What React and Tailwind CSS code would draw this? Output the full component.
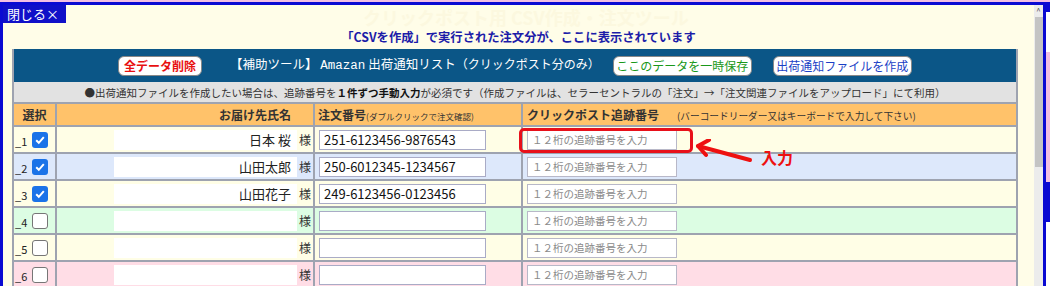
import React from 'react';

const rows = [
  { n: 1, checked: true, name: '日本 桜', order: '251-6123456-9876543', bg: 'bg-[#fffee6]' },
  { n: 2, checked: true, name: '山田太郎', order: '250-6012345-1234567', bg: 'bg-[#dde8fb]' },
  { n: 3, checked: true, name: '山田花子', order: '249-6123456-0123456', bg: 'bg-[#fffee6]' },
  { n: 4, checked: false, name: '', order: '', bg: 'bg-[#dcfde3]' },
  { n: 5, checked: false, name: '', order: '', bg: 'bg-[#fffee6]' },
  { n: 6, checked: false, name: '', order: '', bg: 'bg-[#ffdde6]' },
];

const jp = { fontFamily: '"Noto Sans CJK JP", "Noto Sans", sans-serif' };

function Check({ checked }) {
  if (!checked) {
    return <span className="block w-[16px] h-[16px] rounded-[3px] border border-[#767676] bg-white" />;
  }
  return (
    <span className="flex items-center justify-center w-[16px] h-[16px] rounded-[3px] bg-[#1a73e8]">
      <svg width="12" height="12" viewBox="0 0 12 12">
        <path d="M2.2 6.3 L4.8 8.8 L9.8 3.2" fill="none" stroke="white" strokeWidth="2" />
      </svg>
    </span>
  );
}

function Row({ row }) {
  return (
    <div className={`grid grid-cols-[43px_258px_208px_1fr] h-[27px] border-b-2 border-[#9ea3b0] ${row.bg}`}>
      <div className="flex items-center border-r-2 border-[#9ea3b0] pl-[1px]">
        <span className="text-[11px] text-[#222] w-[17px] pt-[4px]">_{row.n}</span>
        <Check checked={row.checked} />
      </div>
      <div className="flex items-center justify-end border-r-2 border-[#9ea3b0] pr-[2px]">
        <div className="w-[183px] h-[20px] bg-white text-right pr-[6px] text-[13px] leading-[20px] text-[#222]">
          {row.name}
        </div>
        <span className="ml-[2px] text-[12px] text-[#333]">様</span>
      </div>
      <div className="flex items-center border-r-2 border-[#9ea3b0] pl-[4px]">
        <div className="w-[167px] h-[20px] bg-white border border-[#a9abc6] pl-[4px] text-[13px] leading-[18px] text-[#111]">
          {row.order}
        </div>
      </div>
      <div className="relative flex items-center pl-[4px]">
        <div className="w-[150px] h-[20px] bg-white border border-[#b8b8c8] pl-[4px] text-[10.5px] leading-[18px] text-[#8a8a8a]">
          １２桁の追跡番号を入力
        </div>
        {row.n === 1 && (
          <>
            <div className="absolute left-[-4px] top-[1px] w-[174px] h-[25px] border-[3px] border-[#e8101a] rounded-[5px]" />
            <svg className="absolute left-[172px] top-[12px]" width="60" height="24" viewBox="0 0 60 24">
              <path d="M3 7 L55 21" stroke="#ee1010" strokeWidth="4" strokeLinecap="round" />
              <path d="M14 1 L3 7 L11 16" fill="none" stroke="#ee1010" strokeWidth="4" strokeLinecap="round" strokeLinejoin="round" />
            </svg>
            <span className="absolute left-[238px] top-[22px] text-[16px] font-bold text-[#ee1010] leading-none">入力</span>
          </>
        )}
      </div>
    </div>
  );
}

export default function App() {
  return (
    <div className="w-[1050px] h-[286px] overflow-hidden bg-white" style={jp}>
      <div className="h-[2px] bg-[#f2bfe3]" />
      <div className="flex h-[284px]">
        <div className="w-[1046px] flex border-t-[3px] border-x-[3px] border-[#0a0ad2] bg-[#fffde8]">
          <div className="relative flex-1">
            <div className="absolute left-[360px] top-[3px] text-[18px] font-bold text-[#fcf8df] whitespace-nowrap leading-none">
              クリックポスト用 CSV作成・注文ツール
            </div>
            <div className="relative w-[63px] h-[18px] bg-[#1010c8] text-white text-[13px] leading-[18px] pl-[4px]">閉じる×</div>
            <div className="relative h-[26px] pt-[6px] text-center text-[12.3px] leading-[16px] font-bold text-[#1c1ca8]">
              「CSVを作成」で実行された注文分が、ここに表示されています
            </div>
            <div className="ml-[9px] w-[1006px] border-x-2 border-[#9ea3b0]">
              <div className="h-[33px] bg-[#0b5687] flex items-center pl-[104px]">
                <button className="h-[20px] w-[84px] bg-white rounded-[6px] border border-[#888] text-[12px] font-bold text-[#e81010] leading-none">
                  全データ削除
                </button>
                <span className="ml-[28px] text-white text-[12.5px] whitespace-nowrap">
                  【補助ツール】 <span style={{ fontFamily: '"Liberation Mono", monospace' }}>Amazan</span> 出荷通知リスト<span className="text-[12px]">（クリックポスト分のみ）</span>
                </span>
                <button className="ml-[13px] h-[20px] w-[139px] bg-white rounded-[6px] border border-[#888] text-[12px] text-[#1a981a] leading-none">
                  ここのデータを一時保存
                </button>
                <button className="ml-[21px] h-[20px] w-[139px] bg-white rounded-[6px] border border-[#888] text-[12px] text-[#1b3fc6] leading-none">
                  出荷通知ファイルを作成
                </button>
              </div>
              <div className="h-[22px] bg-[#e2e2e2] border-b-2 border-[#9ea3b0] text-center text-[10.5px] leading-[21px] text-[#333] whitespace-nowrap">
                ●出荷通知ファイルを作成したい場合は、追跡番号を<b className="text-[#111]">１件ずつ手動入力</b>が必須です（作成ファイルは、セラーセントラルの「注文」→「注文関連ファイルをアップロード」にて利用）
              </div>
              <div className="grid grid-cols-[43px_258px_208px_1fr] h-[23px] bg-[#ffc26a] border-b-2 border-[#9ea3b0] text-[12px] font-bold text-[#333] leading-[21px]">
                <div className="text-center border-r-2 border-[#9ea3b0]">選択</div>
                <div className="text-right pr-[22px] border-r-2 border-[#9ea3b0]">お届け先氏名</div>
                <div className="pl-[3px] border-r-2 border-[#9ea3b0] whitespace-nowrap">
                  注文番号<span className="text-[8.5px] font-normal">(ダブルクリックで注文確認)</span>
                </div>
                <div className="pl-[4px] whitespace-nowrap">
                  クリックポスト追跡番号<span className="ml-[18px] text-[9.7px] font-normal">(バーコードリーダー又はキーボードで入力して下さい)</span>
                </div>
              </div>
              {rows.map((r) => (
                <Row key={r.n} row={r} />
              ))}
            </div>
          </div>
          <div className="w-[9px] bg-[#ececec] flex flex-col items-center">
            <span className="text-[8px] text-[#555] leading-[12px] h-[12px]">^</span>
            <div className="w-[8px] h-[150px] bg-[#c4c4c4]" />
          </div>
        </div>
        <div className="w-[4px] bg-white flex flex-col">
          <div className="h-[10px] bg-[#0a0ad2]" />
          <div className="h-[40px]" />
          <div className="h-[130px] bg-[#f2bfe3]" />
          <div className="h-[40px] bg-[#0a0ad2]" />
        </div>
      </div>
    </div>
  );
}
